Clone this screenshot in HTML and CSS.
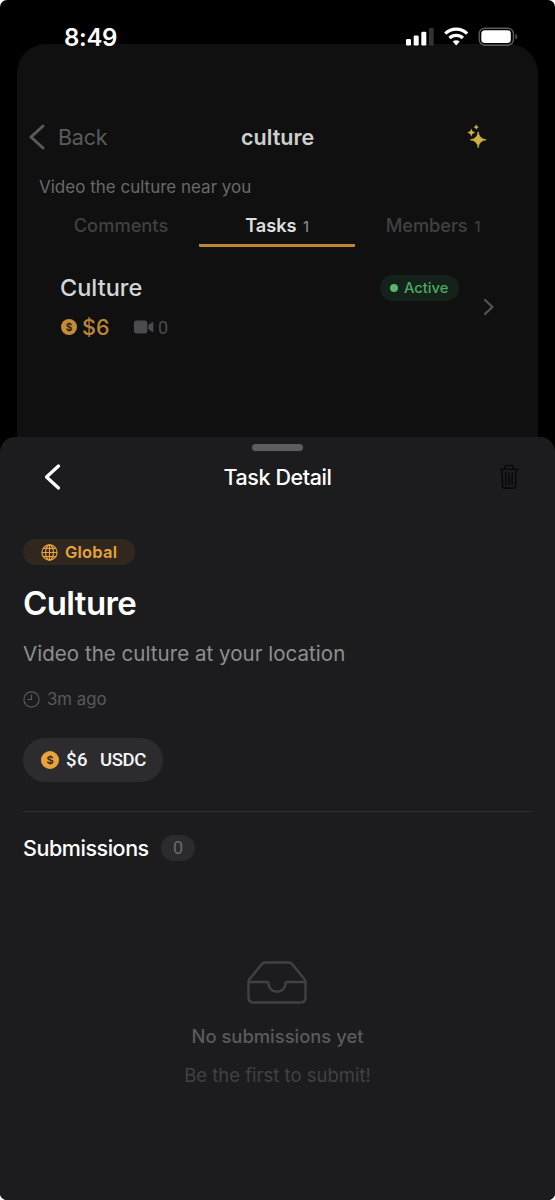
FILE: index.html
```
<!DOCTYPE html>
<html lang="en">
<head>
<meta charset="utf-8">
<title>Task Detail</title>
<link rel="stylesheet" href="styles.css">
</head>
<body>
<main class="phone">
  <div class="status">
    <span class="time">8:49</span>
    <svg class="status-icons" width="112" height="20" viewBox="0 0 112 20">
      <g fill="#fff">
        <rect x="0" y="12" width="5" height="6.5" rx="1.3"/>
        <rect x="7.7" y="8.5" width="5" height="10" rx="1.3"/>
        <rect x="15.3" y="4.8" width="5" height="13.7" rx="1.3"/>
        <rect x="23" y="1" width="4.7" height="17.5" rx="1.3" fill="#333"/>
      </g>
      <g fill="none" stroke="#fff" stroke-width="3.3">
        <path d="M39.300 6.600a15.600 15.600 0 0 1 21.800 0"/>
        <path d="M43.500 11a9.600 9.600 0 0 1 13.400 0"/>
      </g>
      <path d="M46.700 14.600a5 5 0 0 1 7 0L50.200 18.500z" fill="#fff"/>
      <rect x="73.200" y="1.200" width="34.200" height="17" rx="5.500" fill="none" stroke="#5c5c5c" stroke-width="1.400"/>
      <rect x="75.300" y="3.300" width="29.500" height="12.800" rx="3.600" fill="#fff"/>
      <path d="M109.300 6.800q2 .9 2 2.900t-2 2.900z" fill="#555"/>
    </svg>
  </div>

  <section class="card">
    <header class="nav">
      <svg class="nav-chev" width="16" height="26" viewBox="0 0 16 26"><path d="M14 2 2 13l12 11" fill="none" stroke="#5a5a5c" stroke-width="3" stroke-linecap="round" stroke-linejoin="round"/></svg>
      <span class="nav-back">Back</span>
      <h2 class="nav-title">culture</h2>
      <svg class="sparkle" width="20" height="25" viewBox="0 0 20 25" fill="#cdb146">
        <path d="M11.200 7.800Q12 15 19.200 15.800 12 16.600 11.200 23.800 10.400 16.600 3.200 15.800 10.400 15 11.200 7.800z" stroke="#cdb146" stroke-width=".7"/>
        <path d="M4.300 4.200Q4.900 7.900 8.600 8.500 4.900 9.100 4.300 12.800 3.700 9.100 0 8.500 3.700 7.900 4.300 4.200z"/>
        <path d="M9.200.2Q9.600 2.600 12 3 9.600 3.400 9.200 5.800 8.800 3.400 6.400 3 8.800 2.600 9.200.2z"/>
      </svg>
    </header>
    <p class="summary">Video the culture near you</p>
    <nav class="tabs">
      <span class="tab">Comments</span>
      <span class="tab active">Tasks <small>1</small></span>
      <span class="tab">Members <small>1</small></span>
    </nav>
    <article class="task">
      <div class="task-main">
        <h3 class="task-name">Culture</h3>
        <div class="task-meta">
          <svg class="coin-icon" width="16" height="16" viewBox="0 0 16 16"><circle cx="8" cy="8" r="8" fill="#c68b36"/><text class="coin dim" x="8" y="11.600">$</text></svg>
          <span class="price">$6</span>
          <svg class="video" width="20" height="14" viewBox="0 0 20 14" fill="#4b4b4d"><rect x="0" y=".5" width="13.300" height="13" rx="2.500"/><path d="M14.300 5.200 18 2.200Q19.300 1.400 19.300 2.800v8.400q0 1.400-1.300.6l-3.700-3z"/></svg>
          <span class="videos">0</span>
        </div>
      </div>
      <span class="badge"><i class="dot"></i>Active</span>
      <svg class="task-chev" width="12" height="18" viewBox="0 0 12 18"><path d="m2 2 7.500 7L2 16" fill="none" stroke="#555557" stroke-width="2.200" stroke-linecap="round" stroke-linejoin="round"/></svg>
    </article>
  </section>

  <section class="sheet">
    <div class="grabber"></div>
    <header class="sheet-nav">
      <svg width="18" height="28" viewBox="0 0 18 28"><path d="M15.500 3 3.500 14l12 11" fill="none" stroke="#fff" stroke-width="3.300" stroke-linecap="round" stroke-linejoin="round"/></svg>
      <h1 class="sheet-title">Task Detail</h1>
      <svg width="20" height="26" viewBox="0 0 20 26" fill="none" stroke="#09090a" stroke-width="1.600" stroke-linecap="round" stroke-linejoin="round"><path d="M1 5.300h18M6 5V3q0-1.500 1.500-1.500h5Q14 1.500 14 3v2M2.800 5.500l.8 16.600q.1 2 2 2h8.800q1.900 0 2-2l.8-16.600M6.700 9l.3 11.500M10 9v11.500M13.300 9 13 20.500"/></svg>
    </header>
    <span class="scope">
      <svg width="17" height="17" viewBox="0 0 17 17" fill="none" stroke="#e8a33c" stroke-width="1.150"><circle cx="8.500" cy="8.500" r="7.600"/><ellipse cx="8.500" cy="8.500" rx="3.900" ry="7.600"/><path d="M8.500 1v15M1 8.500h15M2.400 4.400h12.200M2.400 12.600h12.200"/></svg>
      Global
    </span>
    <h2 class="title">Culture</h2>
    <p class="description">Video the culture at your location</p>
    <div class="age">
      <svg width="17" height="17" viewBox="0 0 17 17" fill="none" stroke="#58585b" stroke-width="1.200" stroke-linecap="round"><circle cx="8.500" cy="8.500" r="7.600"/><path d="M8.500 3.800v4.700H4.700"/></svg>
      3m ago
    </div>
    <div class="reward">
      <svg width="18" height="18" viewBox="0 0 18 18"><circle cx="9" cy="9" r="9" fill="#e8a33c"/><text class="coin" x="9" y="13">$</text></svg>
      <span class="amount">$6</span><span class="currency">USDC</span>
    </div>
    <hr class="rule">
    <div class="subs">
      <h3 class="subs-title">Submissions</h3>
      <span class="count">0</span>
    </div>
    <div class="empty">
      <svg width="60" height="43" viewBox="0 0 60 43" fill="none" stroke="#414143" stroke-width="2.400" stroke-linejoin="round" stroke-linecap="round"><path d="M1.500 21V36.500q0 5 5 5h47q5 0 5-5V21q0-1.500-1-2.700L45.500 3.500Q44 1.500 41.500 1.500h-23Q16 1.500 14.500 3.500L2.500 18.300Q1.500 19.500 1.500 21H20.200q1.300 0 1.300 1.500a8.500 8.300 0 0 0 17 0q0-1.500 1.300-1.500H58"/></svg>
      <p class="empty-title">No submissions yet</p>
      <p class="empty-hint">Be the first to submit!</p>
    </div>
  </section>
</main>
</body>
</html>
```
FILE: styles.css
```
* { box-sizing: border-box; }
body { margin: 0; background: #fff; font-family: Inter, "Liberation Sans", sans-serif; }
h1, h2, h3, p { margin: 0; font-weight: 400; }
svg { display: block; flex: none; overflow: visible; }

.phone { position: relative; width: 555px; height: 1200px; background: #000; border-radius: 7px; overflow: hidden; display: flex; flex-direction: column; }

/* The status bar lies over the top edge of the card behind the sheet */
.status { position: absolute; top: 22px; left: 64px; right: 37px; height: 30px; display: flex; justify-content: space-between; color: #fff; }
.time { font-size: 24px; font-weight: 600; line-height: 31px; letter-spacing: -.3px; }
.status-icons { margin-top: 5px; }

.card { margin: 44px 17px 0; height: 393px; background: #101010; border-radius: 29px 29px 0 0; padding-top: 78px; flex: none; }
.nav { display: flex; align-items: center; height: 30px; padding-left: 12px; }
.nav-back { width: 196px; padding-left: 13px; font-size: 21.500px; color: #5a5a5c; letter-spacing: -.2px; }
.nav-title { width: 226px; font-size: 21.500px; font-weight: 600; color: #cfcfcf; }
.sparkle { margin-bottom: 2px; }
.summary { margin: 22px 0 0 22px; height: 26px; line-height: 26px; font-size: 17px; color: #68686b; }
.tabs { display: grid; grid-template-columns: repeat(3, 156px); margin-left: 26px; }
.tab { height: 47px; padding-top: 12px; line-height: 26px; text-align: center; font-size: 18.300px; font-weight: 500; color: #404042; }
.tab small { font-size: 14.500px; font-weight: 500; margin-left: 2px; }
.tab:last-child { letter-spacing: -.1px; }
.tab.active { color: #dedede; border-bottom: 3px solid #bd8737; border-radius: 1px; font-weight: 600; letter-spacing: -.1px; }
.tab.active small { color: #858588; }
.task { display: flex; align-items: flex-start; margin-top: 25px; padding-left: 43px; }
.task-main { width: 320px; }
.task-name { font-size: 23.500px; font-weight: 500; line-height: 32px; color: #d5d5d5; }
.task-meta { display: flex; align-items: center; height: 28px; margin-top: 9px; }
.coin-icon { margin-left: 1px; }
.price { margin-left: 5px; width: 52px; font-size: 21.500px; font-weight: 500; color: #bd8535; }
.videos { margin-left: 4px; font-family: Roboto, sans-serif; font-size: 18px; color: #4b4b4d; }
.badge { width: 79px; height: 26px; margin-top: 3px; border-radius: 13px; background: #15221a; color: #4caa65; display: flex; align-items: center; padding-left: 10px; gap: 6px; font-size: 14.700px; font-weight: 500; }
.dot { width: 8px; height: 8px; border-radius: 50%; background: #53b66c; }
.task-chev { margin: 26px 0 0 24px; }

.coin { font-family: Inter, sans-serif; font-size: 11px; font-weight: 700; text-anchor: middle; fill: #3a2b17; }
.coin.dim { font-size: 10px; fill: #2c200f; }

.sheet { flex: 1; background: #1c1c1e; border-radius: 15px 15px 0 0; padding: 7px 23px 0; display: flex; flex-direction: column; align-items: flex-start; }
.grabber { width: 51px; height: 7px; border-radius: 4px; background: #5c5c61; align-self: center; }
.sheet-nav { width: 100%; height: 30px; margin-top: 11px; padding: 0 13px 0 20px; display: flex; align-items: center; justify-content: space-between; }
.sheet-title { font-size: 21.500px; font-weight: 500; color: #fff; letter-spacing: -.4px; margin-right: 5px; }
.scope { width: 112px; height: 26px; margin-top: 47px; border-radius: 13px; background: #30281e; color: #e8a33c; display: flex; align-items: center; gap: 7px; padding-left: 18px; font-size: 16.500px; font-weight: 600; letter-spacing: .2px; }
.title { margin-top: 17px; line-height: 42px; font-size: 33px; font-weight: 600; color: #fff; letter-spacing: -.6px; }
.description { margin-top: 15px; line-height: 30px; font-size: 20.500px; color: #8e8e93; letter-spacing: .04px; }
.age { margin-top: 18px; height: 24px; display: flex; align-items: center; gap: 7px; font-size: 16.800px; color: #58585b; }
.reward { margin-top: 27px; width: 140px; height: 44px; border-radius: 22px; background: #2c2c2e; color: #f4f4f5; display: flex; align-items: center; padding-left: 18px; font-family: Roboto, sans-serif; font-size: 18.500px; font-weight: 500; }
.amount { margin-left: 7px; width: 34px; letter-spacing: .5px; }
.currency { letter-spacing: -.4px; }
.rule { width: 509px; height: 1px; margin: 29px 0 0; border: 0; background: #303032; }
.subs { display: flex; align-items: center; height: 28px; margin-top: 22px; }
.subs-title { width: 138px; font-size: 21.500px; font-weight: 500; color: #fff; letter-spacing: -.45px; }
.count { width: 34px; height: 26px; border-radius: 13px; background: #2b2b2d; color: #69696d; text-align: center; line-height: 26px; font-family: Roboto, sans-serif; font-size: 18px; }
.empty { align-self: center; margin-top: 99px; display: flex; flex-direction: column; align-items: center; }
.empty svg { margin-right: 1px; }
.empty-title { margin-top: 19px; line-height: 26px; font-size: 18.400px; font-weight: 500; color: #5a5a5e; }
.empty-hint { margin-top: 13px; line-height: 26px; font-size: 18.500px; color: #414144; }
```
